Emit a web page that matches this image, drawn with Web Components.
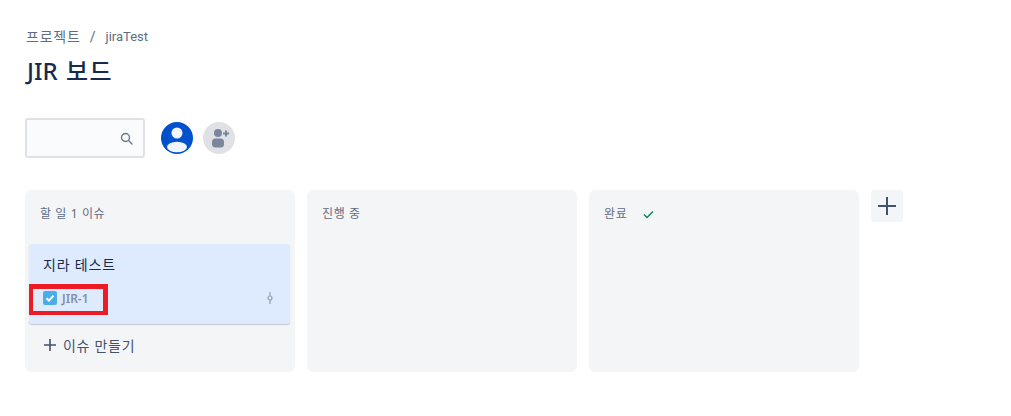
<!DOCTYPE html>
<html lang="ko">
<head>
<meta charset="utf-8">
<title>JIR 보드</title>
<style>
  html, body { margin: 0; background: #fff; }
  body {
    font-family: "Noto Sans", "Noto Sans CJK KR", sans-serif;
    color: #172b4d;
  }
</style>
</head>
<body>
<board-page>
  <board-header slot="header" crumb-root="프로젝트" crumb-leaf="jiraTest" title-text="JIR 보드"></board-header>
  <board-filters slot="filters"></board-filters>
  <board-column name="할 일 1 이슈" creatable>
    <issue-card summary="지라 테스트" issue-key="JIR-1" marked></issue-card>
  </board-column>
  <board-column name="진행 중"></board-column>
  <board-column name="완료" done></board-column>
  <add-column></add-column>
</board-page>

<script>
class BoardPage extends HTMLElement {
  constructor() {
    super();
    this.attachShadow({ mode: "open" });
    this.shadowRoot.innerHTML = `
      <style>
        :host { display: block; padding: 26px 25px 0; }
        .columns { display: flex; align-items: flex-start; gap: 12px; margin-top: 32px; }
      </style>
      <slot name="header"></slot>
      <slot name="filters"></slot>
      <div class="columns"><slot></slot></div>
    `;
  }
}

class BoardHeader extends HTMLElement {
  constructor() {
    super();
    this.attachShadow({ mode: "open" });
  }

  connectedCallback() {
    this.shadowRoot.innerHTML = `
      <style>
        :host { display: block; }
        .crumbs {
          display: flex; height: 20px; line-height: 20px; padding: 0 0 0 1px;
          font-family: Roboto, "Noto Sans CJK KR", sans-serif; font-size: 14px; color: #5e6c84;
          position: relative; top: 1px;
        }
        .root { letter-spacing: 0.8px; }
        .sep { padding: 0 10px 0 9px; }
        .leaf { font-size: 13px; }
        h1 {
          margin: 12px 0 0 2px; height: 26px; line-height: 26px;
          font-size: 24px; font-weight: 500; color: #172b4d; word-spacing: 2px;
        }
        .ko { letter-spacing: 1.6px; }
      </style>
      <div class="crumbs">
        <span class="root">${this.getAttribute("crumb-root")}</span>
        <span class="sep">/</span>
        <span class="leaf">${this.getAttribute("crumb-leaf")}</span>
      </div>
      <h1>${this.getAttribute("title-text").replace(/([가-힣]+)/, '<span class="ko">$1</span>')}</h1>
    `;
  }
}

class BoardFilters extends HTMLElement {
  constructor() {
    super();
    this.attachShadow({ mode: "open" });
    this.shadowRoot.innerHTML = `
      <style>
        :host { display: flex; align-items: center; margin-top: 34px; }
        .search {
          box-sizing: border-box; width: 120px; height: 40px; padding-right: 10px;
          display: flex; align-items: center; justify-content: flex-end;
          background: #fafbfc; border: 2px solid #dfe1e6; border-radius: 3px;
        }
        .avatar { display: block; width: 32px; height: 32px; }
        .me { margin-left: 16px; }
        .invite { margin-left: 10px; }
      </style>
      <div class="search">
        <svg width="13" height="13" viewBox="0 0 13 13" fill="none" stroke="#6b778c" stroke-width="1.4">
          <circle cx="5.5" cy="5.5" r="4"/>
          <path d="M8.6 8.6 L12 12" stroke-linecap="round"/>
        </svg>
      </div>
      <svg class="avatar me" viewBox="0 0 32 32">
        <clipPath id="round"><circle cx="16" cy="16" r="16"/></clipPath>
        <circle cx="16" cy="16" r="16" fill="#0052cc"/>
        <circle cx="16" cy="11" r="5.5" fill="#f0f5ff"/>
        <ellipse cx="16" cy="25" rx="10" ry="5.2" fill="#f0f5ff" clip-path="url(#round)"/>
      </svg>
      <svg class="avatar invite" viewBox="0 0 32 32">
        <circle cx="16" cy="16" r="16" fill="#dfe1e6"/>
        <circle cx="15" cy="11" r="4" fill="#7a869a"/>
        <rect x="9" y="16.5" width="12" height="9" rx="3.5" fill="#7a869a"/>
        <path d="M20 11.5 H26 M23 8.5 V14.5" stroke="#7a869a" stroke-width="2"/>
      </svg>
    `;
  }
}

class BoardColumn extends HTMLElement {
  constructor() {
    super();
    this.attachShadow({ mode: "open" });
  }

  connectedCallback() {
    const done = this.hasAttribute("done");
    const creatable = this.hasAttribute("creatable");
    this.shadowRoot.innerHTML = `
      <style>
        :host {
          display: flex; flex-direction: column; box-sizing: border-box;
          width: 270px; height: 182px; padding: 0 4px;
          background: #f4f5f7; border-radius: 6px;
        }
        .head {
          display: flex; align-items: center; flex: none;
          height: 54px; padding: 0 11px 8px; box-sizing: border-box;
          font-size: 12px; letter-spacing: 0.6px; color: #5e6c84;
        }
        .head svg { margin-left: 16px; margin-top: 2px; }
        .create {
          display: flex; align-items: center; gap: 7px;
          height: 42px; padding-left: 15px;
          font-size: 14px; letter-spacing: 0.7px; color: #42526e;
        }
      </style>
      <div class="head">
        <span>${this.getAttribute("name")}</span>
        ${done ? `<svg width="11" height="9" viewBox="0 0 11 9" fill="none" stroke="#00875a" stroke-width="1.5"><path d="M1 4.5 L4 7.5 L10 1.5"/></svg>` : ""}
      </div>
      <slot></slot>
      ${creatable ? `
        <div class="create">
          <svg width="12" height="12" viewBox="0 0 12 12" stroke="#42526e" stroke-width="1.6"><path d="M6 0 V12 M0 6 H12"/></svg>
          <span>이슈 만들기</span>
        </div>` : ""}
    `;
  }
}

class IssueCard extends HTMLElement {
  constructor() {
    super();
    this.attachShadow({ mode: "open" });
  }

  connectedCallback() {
    const marked = this.hasAttribute("marked");
    this.shadowRoot.innerHTML = `
      <style>
        :host {
          display: block; position: relative; box-sizing: border-box;
          height: 80px; padding: 10px 14px 0; margin-right: 1px;
          background: #deebff; border-radius: 3px;
          box-shadow: 0 1px 1px #c1c7d0;
        }
        .summary { height: 22px; line-height: 22px; font-size: 14px; letter-spacing: 0.8px; color: #172b4d; }
        .meta { display: flex; align-items: center; height: 20px; margin-top: 12px; }
        .type { display: block; width: 14px; height: 14px; margin-right: 5px; }
        .key { font-size: 12px; font-weight: 600; color: #8590a2; }
        .priority { display: block; margin-left: auto; margin-right: 3px; }
        /* Annotation drawn over the card */
        .mark {
          position: absolute; left: 0; top: 40px; width: 79px; height: 31px;
          box-sizing: border-box; border: 4px solid #ed1c24; border-top-width: 5px; border-right-width: 5px;
        }
      </style>
      <div class="summary">${this.getAttribute("summary")}</div>
      <div class="meta">
        <svg class="type" viewBox="0 0 14 14">
          <rect width="14" height="14" rx="2" fill="#4bade8"/>
          <path d="M3.5 7.2 L6 9.6 L10.5 4.6" fill="none" stroke="#fff" stroke-width="2"/>
        </svg>
        <span class="key">${this.getAttribute("issue-key")}</span>
        <svg class="priority" width="6" height="12" viewBox="0 0 6 12" fill="none" stroke="#97a0af" stroke-width="1.2">
          <path d="M3 0 V4 M3 8 V12"/>
          <circle cx="3" cy="6" r="2"/>
        </svg>
      </div>
      ${marked ? `<div class="mark"></div>` : ""}
    `;
  }
}

class AddColumn extends HTMLElement {
  constructor() {
    super();
    this.attachShadow({ mode: "open" });
    this.shadowRoot.innerHTML = `
      <style>
        :host {
          display: flex; align-items: center; justify-content: center; flex: none;
          width: 32px; height: 32px; background: #f4f5f7; border-radius: 3px;
        }
      </style>
      <svg width="18" height="18" viewBox="0 0 18 18" stroke="#42526e" stroke-width="2"><path d="M9 0 V18 M0 9 H18"/></svg>
    `;
  }
}

customElements.define("board-page", BoardPage);
customElements.define("board-header", BoardHeader);
customElements.define("board-filters", BoardFilters);
customElements.define("board-column", BoardColumn);
customElements.define("issue-card", IssueCard);
customElements.define("add-column", AddColumn);
</script>
</body>
</html>
